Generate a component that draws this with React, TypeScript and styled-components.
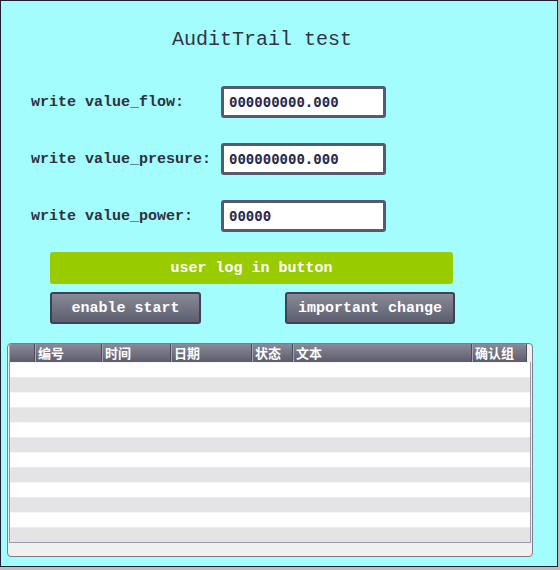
import React from "react";
import styled, { createGlobalStyle } from "styled-components";

const Global = createGlobalStyle`
  html, body { margin: 0; padding: 0; background: #bdbdbd; }
  * { box-sizing: border-box; }
`;

const MONO = `"Liberation Mono", "DejaVu Sans Mono", monospace`;
const CJK = `"Noto Sans CJK SC", "Liberation Sans", sans-serif`;

const Frame = styled.div`
  width: 558px;
  height: 567px;
  border: 1px solid #1c2030;
  background: #a3fdfd;
  display: flex;
  flex-direction: column;
`;

const Title = styled.h1`
  margin: 27px 0 0 0;
  padding-left: 171px;
  font-family: ${MONO};
  font-weight: normal;
  font-size: 20px;
  line-height: 24px;
  color: #333344;
`;

const FormGrid = styled.div`
  margin-top: 34px;
  padding-left: 30px;
  display: grid;
  grid-template-columns: 190px 165px;
  grid-auto-rows: 32px;
  row-gap: 25px;
  align-items: center;
`;

const Label = styled.label`
  font-family: ${MONO};
  font-weight: bold;
  font-size: 15px;
  color: #2e3040;
  white-space: pre;
`;

const ValueInput = styled.input`
  width: 165px;
  height: 32px;
  border: 3px solid #555a6c;
  border-radius: 3px;
  background: #ffffff;
  padding: 0 0 0 5px;
  font-family: "DejaVu Sans Mono", monospace;
  font-weight: bold;
  font-size: 14px;
  color: #2a2a4a;
  outline: none;
`;

const ButtonColumn = styled.div`
  margin-top: 20px;
  margin-left: 49px;
  width: 405px;
  display: flex;
  flex-direction: column;
  gap: 8px;
`;

const ButtonRow = styled.div`
  display: flex;
  justify-content: space-between;
`;

const GreenButton = styled.button`
  width: 403px;
  height: 32px;
  border: none;
  border-radius: 3px;
  background: #99cc00;
  color: #ffffff;
  font-family: ${MONO};
  font-weight: bold;
  font-size: 15px;
  padding: 0;
`;

const GreyButton = styled.button<{ $w: number }>`
  width: ${(p) => p.$w}px;
  height: 32px;
  border: 2px solid #3e4252;
  border-radius: 3px;
  background: linear-gradient(#8a8a98, #5a5e6e);
  color: #ffffff;
  font-family: ${MONO};
  font-weight: bold;
  font-size: 15px;
  padding: 0;
`;

const Panel = styled.div`
  margin-top: 19px;
  margin-left: 6px;
  width: 526px;
  height: 214px;
  border: 1px solid #7c7c8a;
  border-radius: 4px;
  background: #f0f0f0;
  padding: 0 0 0 1px;
`;

const Header = styled.div`
  width: 518px;
  height: 18px;
  display: grid;
  grid-template-columns: 26px 67px 69px 81px 41px 179px 55px;
  background: linear-gradient(#8a8a98, #5c5c6a);
  border-radius: 3px 3px 0 0;
`;

const HeadCell = styled.div`
  border-left: 1px solid #a4a4b4;
  border-right: 1px solid #4c4c5a;
  padding-left: 2px;
  font-family: ${CJK};
  font-weight: bold;
  font-size: 13px;
  line-height: 17px;
  color: #ffffff;
  overflow: hidden;
  white-space: nowrap;
`;

const Rows = styled.div`
  width: 522px;
  border-left: 1px solid #9a9aa6;
  border-right: 1px solid #9a9aa6;
  border-bottom: 1px solid #9a9aa6;
`;

const Row = styled.div<{ $alt: boolean }>`
  height: 15px;
  background: ${(p) => (p.$alt ? "#e4e4e6" : "#ffffff")};
  border-top: 1px solid ${(p) => (p.$alt ? "#ececee" : "#f6f6f6")};
`;

const columns = ["", "编号", "时间", "日期", "状态", "文本", "确认组"];

export default function App() {
  return (
    <>
      <Global />
      <Frame>
        <Title>AuditTrail test</Title>
        <FormGrid>
          <Label>write value_flow:</Label>
          <ValueInput readOnly defaultValue="000000000.000" />
          <Label>write value_presure:</Label>
          <ValueInput readOnly defaultValue="000000000.000" />
          <Label>write value_power:</Label>
          <ValueInput readOnly defaultValue="00000" />
        </FormGrid>
        <ButtonColumn>
          <GreenButton>user log in button</GreenButton>
          <ButtonRow>
            <GreyButton $w={151}>enable start</GreyButton>
            <GreyButton $w={170}>important change</GreyButton>
          </ButtonRow>
        </ButtonColumn>
        <Panel>
          <Header>
            {columns.map((c, i) => (
              <HeadCell key={i}>{c}</HeadCell>
            ))}
          </Header>
          <Rows>
            {Array.from({ length: 12 }).map((_, i) => (
              <Row key={i} $alt={i % 2 === 1} />
            ))}
          </Rows>
        </Panel>
      </Frame>
    </>
  );
}
